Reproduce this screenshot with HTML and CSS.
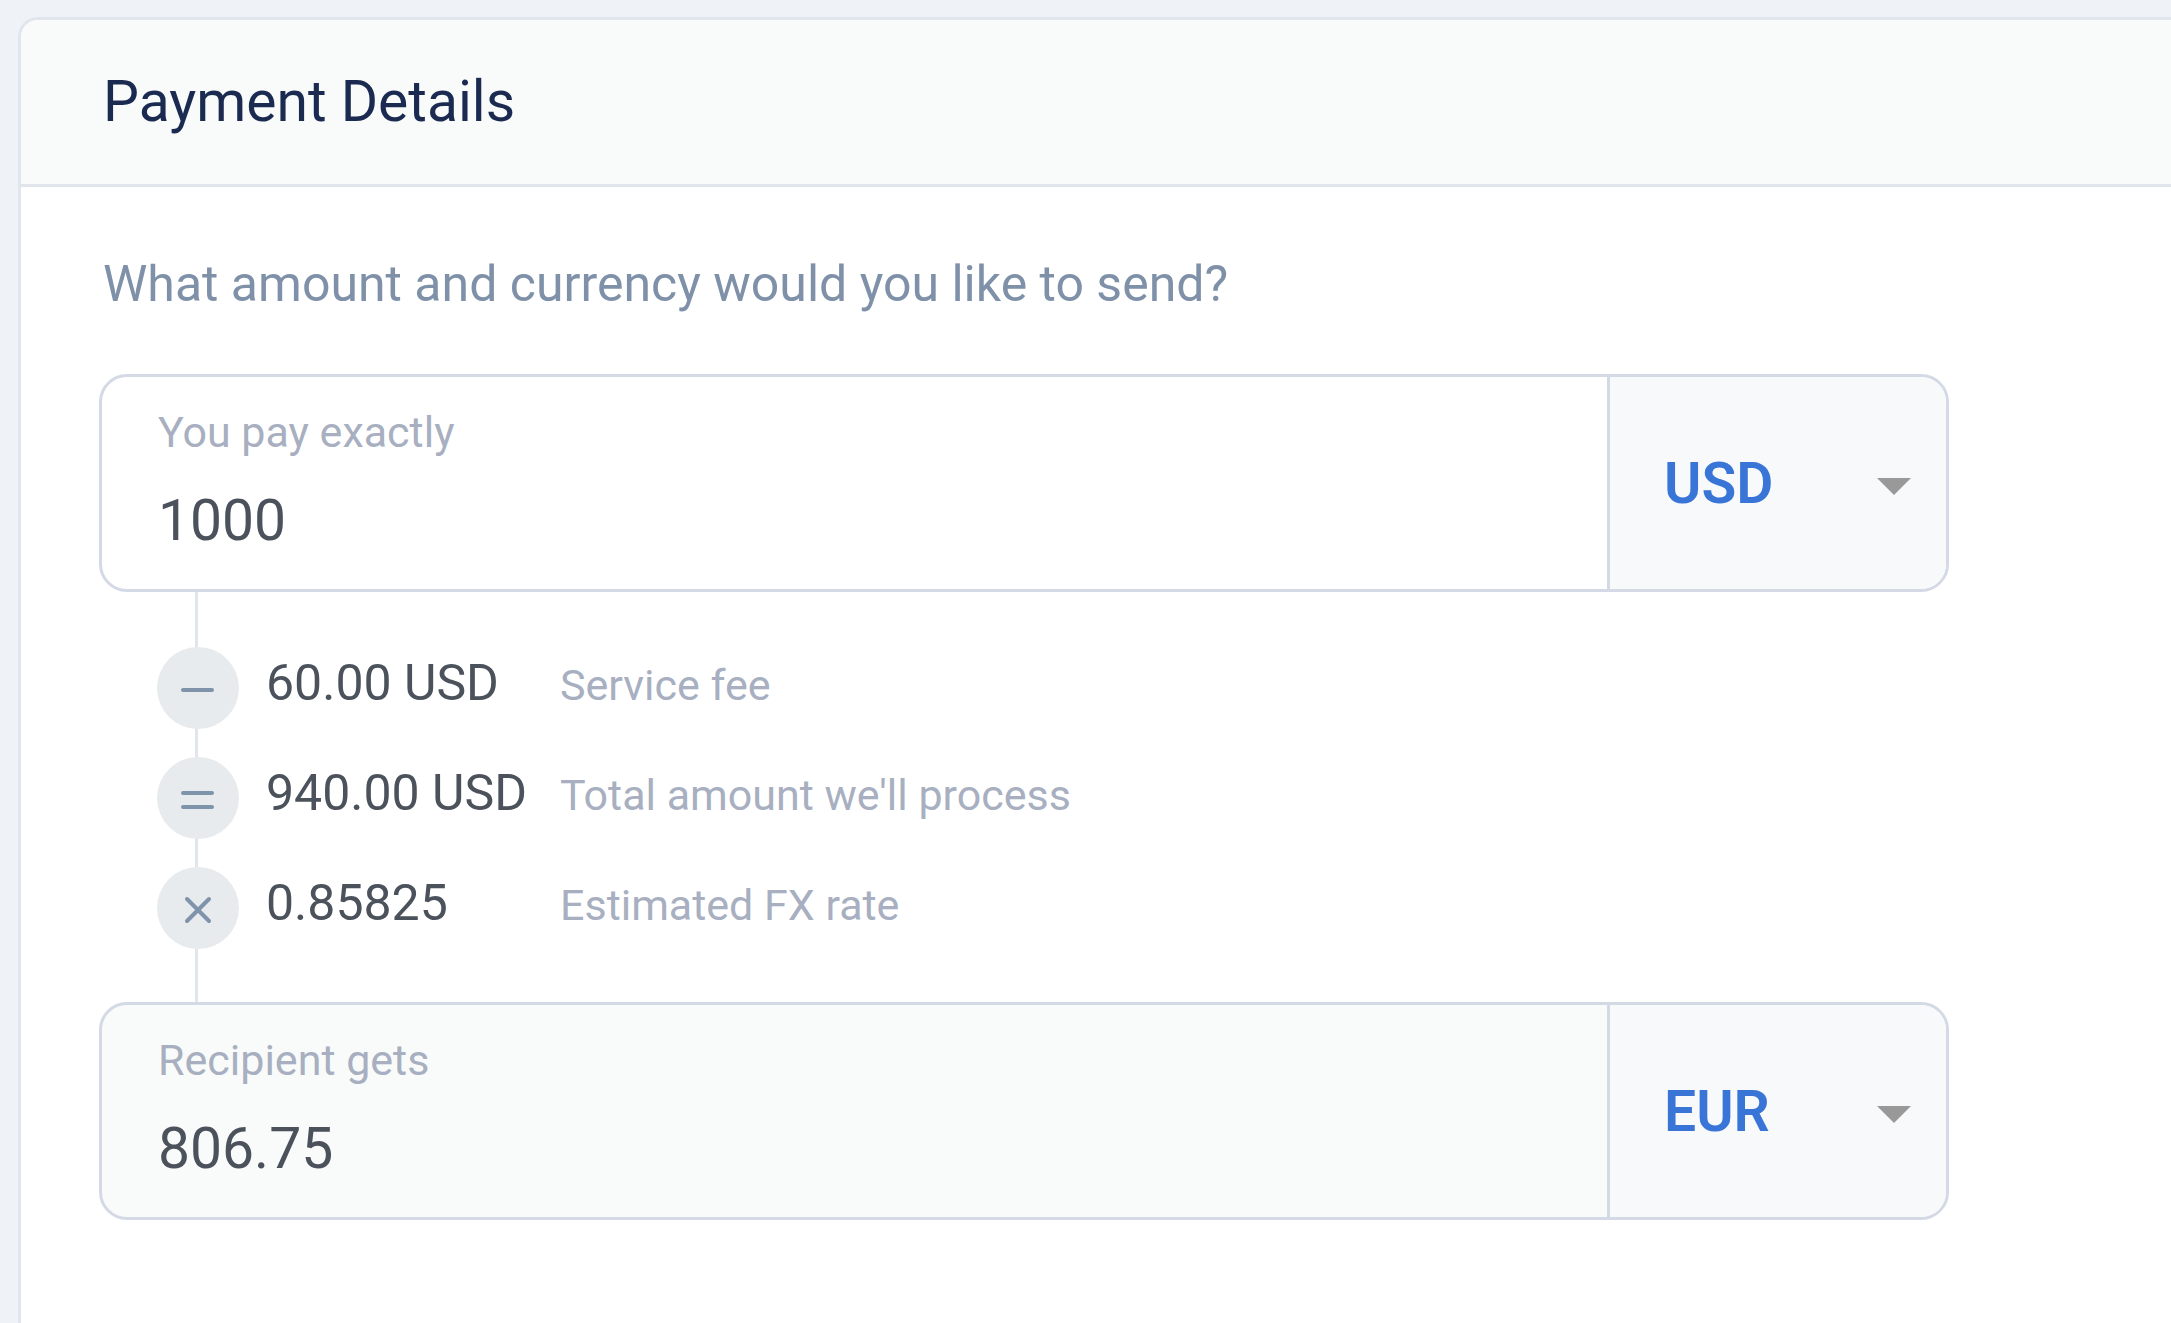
FILE: index.html
```html
<!DOCTYPE html>
<html lang="en">
<head>
<meta charset="utf-8">
<meta name="viewport" content="width=device-width, initial-scale=1">
<title>Payment Details</title>
<link rel="stylesheet" href="styles.css">
</head>
<body>
<main class="card">
  <header class="card-header">
    <h1 class="card-title">Payment Details</h1>
  </header>
  <form class="card-body">
    <h2 class="question">What amount and currency would you like to send?</h2>

    <div class="amount">
      <div class="amount-field">
        <label class="amount-label" for="pay">You pay exactly</label>
        <input class="amount-input" id="pay" type="text" inputmode="decimal" value="1000">
      </div>
      <div class="currency">
        <select class="currency-select" aria-label="Currency you pay in">
          <option selected>USD</option>
          <option>EUR</option>
        </select>
        <svg class="currency-arrow" viewBox="0 0 34 17" aria-hidden="true"><path d="M0 0h34L17 17z"/></svg>
      </div>
    </div>

    <ul class="steps">
      <li class="step">
        <svg class="step-icon" viewBox="0 0 82 82" aria-hidden="true"><path d="M26 43h29"/></svg>
        <div class="step-text"><span class="step-value">60.00 USD</span><span class="step-label">Service fee</span></div>
      </li>
      <li class="step">
        <svg class="step-icon" viewBox="0 0 82 82" aria-hidden="true"><path d="M26 36h29M26 50h29"/></svg>
        <div class="step-text"><span class="step-value">940.00 USD</span><span class="step-label">Total amount we'll process</span></div>
      </li>
      <li class="step">
        <svg class="step-icon" viewBox="0 0 82 82" aria-hidden="true"><path d="M30 32l22 22M52 32L30 54"/></svg>
        <div class="step-text"><span class="step-value">0.85825</span><span class="step-label">Estimated FX rate</span></div>
      </li>
    </ul>

    <div class="amount amount-result">
      <div class="amount-field">
        <label class="amount-label" for="gets">Recipient gets</label>
        <input class="amount-input" id="gets" type="text" value="806.75" readonly>
      </div>
      <div class="currency">
        <select class="currency-select" aria-label="Currency the recipient gets">
          <option selected>EUR</option>
          <option>USD</option>
        </select>
        <svg class="currency-arrow" viewBox="0 0 34 17" aria-hidden="true"><path d="M0 0h34L17 17z"/></svg>
      </div>
    </div>
  </form>
</main>
</body>
</html>
```
FILE: styles.css
```css
* {
  box-sizing: border-box;
}

body {
  display: flex;
  min-height: 100vh;
  margin: 0;
  padding: 17px 0 0 18px;
  background: #eff2f7;
  font-family: Roboto, "Liberation Sans", sans-serif;
}

.card {
  flex: 1;
  min-width: 0;
  border: 3px solid #e1e5ed;
  border-width: 3px 0 0 3px;
  border-radius: 20px 0 0 0;
  background: #fff;
  overflow: hidden;
}

.card-header {
  padding: 50px 82px;
  border-bottom: 3px solid #e1e6ed;
  background: #f9fbfa;
}

.card-title {
  margin: 0;
  color: #1b2a50;
  font-size: 57px;
  font-weight: 400;
  line-height: 64px;
}

.card-body {
  padding: 67px 78px;
}

.question {
  margin: 0 0 60px;
  padding-left: 4px;
  color: #7f91a8;
  font-size: 50px;
  font-weight: 400;
  line-height: 60px;
}

/* Amount box: value on the left, currency on the right */
.amount {
  display: flex;
  max-width: 1850px;
  border: 3px solid #d4d9e6;
  border-radius: 28px;
  background: #fff;
  overflow: hidden;
}

.amount-result {
  background: #f9fbfa;
}

.amount-field {
  display: flex;
  flex: 1;
  flex-direction: column;
  gap: 31px;
  min-width: 0;
  padding: 29px 56px 36px;
}

.amount-label {
  color: #a7afc0;
  font-size: 43px;
  line-height: 52px;
}

.amount-input {
  width: 100%;
  height: 64px;
  padding: 0;
  border: 0;
  outline: 0;
  background: transparent;
  color: #4b525b;
  font: 400 57px/64px Roboto, "Liberation Sans", sans-serif;
}

.currency {
  display: grid;
  flex: 0 0 339px;
  align-items: center;
  border-left: 3px solid #d4d9e6;
  background: #f8f9fb;
}

.currency-select {
  grid-area: 1 / 1;
  width: 100%;
  height: 100%;
  padding: 2px 80px 0 54px;
  border: 0;
  outline: 0;
  appearance: none;
  background: transparent;
  color: #3875d7;
  font: 600 57px/64px Roboto, "Liberation Sans", sans-serif;
}

.currency-arrow {
  grid-area: 1 / 1;
  justify-self: end;
  width: 34px;
  height: 17px;
  margin: 6px 35px 0 0;
  fill: #999;
  pointer-events: none;
}

/* Calculation steps, threaded on a vertical line */
.steps {
  display: flex;
  flex-direction: column;
  gap: 28px;
  margin: 0;
  padding: 55px 0 53px 58px;
  background: linear-gradient(#e1e5ee, #e1e5ee) 96px 0 / 3px 100% no-repeat;
  list-style: none;
}

.step {
  display: flex;
  align-items: center;
  gap: 27px;
}

.step-icon {
  flex: none;
  width: 82px;
  height: 82px;
  border-radius: 50%;
  background: #e8ebee;
  fill: none;
  stroke: #7f93ab;
  stroke-width: 4;
  stroke-linecap: round;
}

.step-text {
  display: grid;
  grid-template-columns: 267px auto;
  column-gap: 27px;
  align-items: baseline;
  padding-bottom: 10px;
}

.step-value {
  color: #4b525b;
  font-size: 50px;
  line-height: 60px;
}

.step-label {
  color: #a7afc0;
  font-size: 43px;
  line-height: 52px;
}
```
